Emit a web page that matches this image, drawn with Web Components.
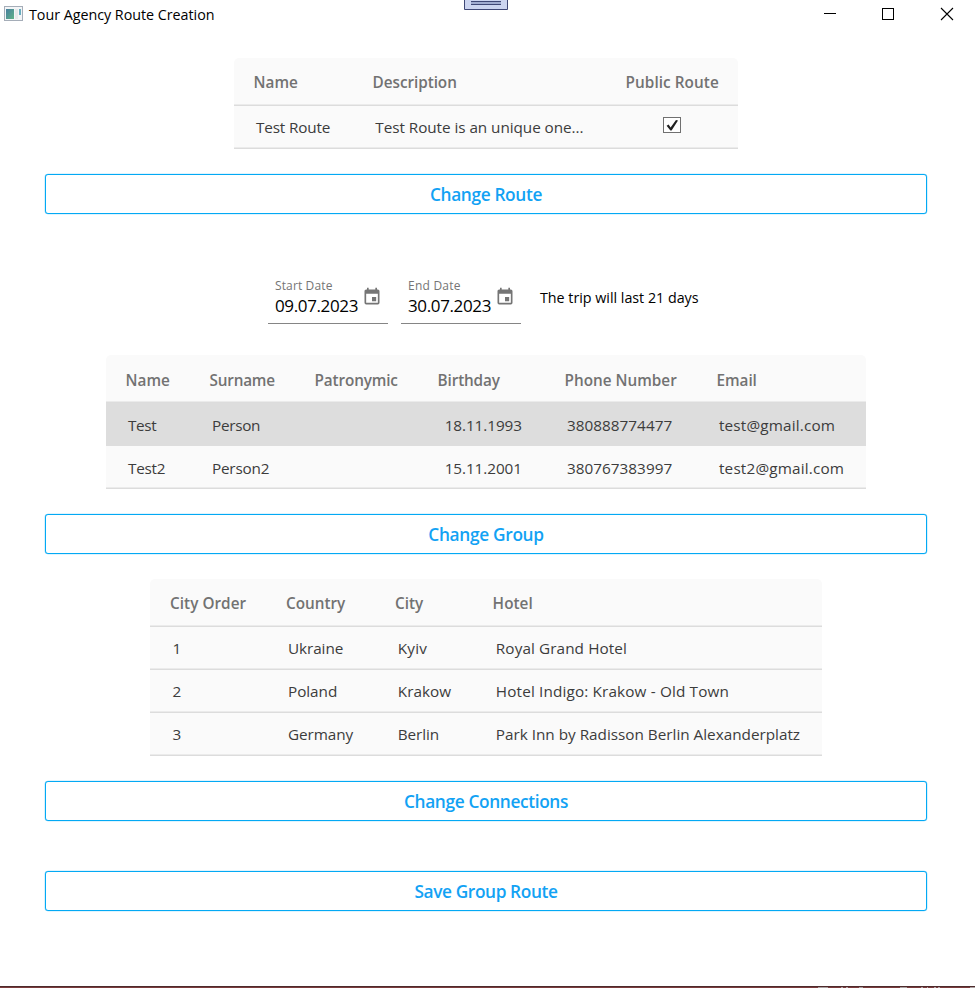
<!DOCTYPE html>
<html lang="en"><head><meta charset="utf-8"><title>Tour Agency Route Creation</title>
<style>
html,body{margin:0;height:100%;background:#fff;overflow:hidden}
body{font-family:"Open Sans","Noto Sans",sans-serif;color:#000}
</style></head><body>
<route-window></route-window>
<script>
// Text run whose tracking is adjusted so it takes the given width.
class FitText extends HTMLElement{
  connectedCallback(){
    const r=this.attachShadow({mode:'open'});
    r.innerHTML='<style>:host{display:inline-block;white-space:pre}span{display:inline-block}</style><span></span>';
    const s=r.querySelector('span'),t=this.getAttribute('text');
    s.textContent=t;
    const want=+this.getAttribute('w');
    if(want){
      const n=[...t].length,have=s.getBoundingClientRect().width;
      s.style.letterSpacing=((want-have)/n).toFixed(3)+'px';
    }
  }
}
customElements.define('fit-text',FitText);

const T=(text,w)=>`<fit-text text="${text}" w="${w}"></fit-text>`;

class TitleBar extends HTMLElement{
  connectedCallback(){
    this.attachShadow({mode:'open'}).innerHTML=`<style>
    :host{display:flex;height:30px;align-items:center;position:relative;font-size:14.3px}
    .app{margin-left:4px;display:block;margin-top:-3px}
    .title{margin-left:6px;flex:1;line-height:30px}
    .tab{position:absolute;left:464px;top:0}
    .ctl{height:30px;flex:none;display:block}
    </style>
    <svg class="app" width="19" height="15"><rect x=".5" y=".5" width="18" height="14" fill="#f3f5f7" stroke="#a5adb8"/><defs><linearGradient id="g" x1="0" y1="0" x2="1" y2="1"><stop offset="0" stop-color="#477f9f"/><stop offset="1" stop-color="#5fb287"/></linearGradient></defs><rect x="2" y="3" width="8" height="10" fill="url(#g)"/><rect x="11" y="3" width="3" height="10" fill="#e6e8ea"/><rect x="15" y="3" width="2" height="6" fill="#69aec0"/></svg>
    <span class="title">${T('Tour Agency Route Creation',185.5)}</span>
    <svg class="tab" width="44" height="10"><path d="M.5 0V9.5H43.5V0" fill="#ccd5f0" stroke="#3f4876"/><path d="M7 2.5H37" stroke="#a0acd0" stroke-width="3"/><path d="M7 1.5H37M7 4.5H37" stroke="#3f4876"/></svg>
    <svg class="ctl" width="58" viewBox="800 0 58 30"><path d="M824 13.5H836" stroke="#000"/></svg>
    <svg class="ctl" width="59" viewBox="858 0 59 30"><rect x="882.5" y="8.5" width="11" height="11" fill="none" stroke="#000"/></svg>
    <svg class="ctl" width="58" viewBox="917 0 58 30"><path d="M941 8L953 20M953 8L941 20" stroke="#000" stroke-width="1.1"/></svg>`;
  }
}
customElements.define('title-bar',TitleBar);

class OutlineButton extends HTMLElement{
  connectedCallback(){
    this.attachShadow({mode:'open'}).innerHTML=`<style>
    :host{display:block;width:882px;height:40px;margin-left:45px}
    button{box-sizing:border-box;width:100%;height:100%;padding:2px 0 0;margin:0;border:1.5px solid #03a9f4;border-radius:3px;background:#fff;color:#12a2f4;font:600 17.3px/36px "Open Sans","Noto Sans",sans-serif;display:flex;align-items:center;justify-content:center;box-shadow:0 0 0 .3px #7fd3f9}
    </style><button>${T(this.getAttribute('label'),this.getAttribute('w'))}</button>`;
  }
}
customElements.define('outline-button',OutlineButton);

class CheckMark extends HTMLElement{
  connectedCallback(){
    this.attachShadow({mode:'open'}).innerHTML=`<style>:host{display:block}svg{display:block}</style>
    <svg width="18" height="16"><rect x=".5" y=".5" width="17" height="15" fill="#fff" stroke="#707070"/><path d="M3.6 8.8L5.6 7.6L7.6 10.4L13 3L15 3.6L8.6 13.4H7.4Z" fill="#212121"/></svg>`;
  }
}
customElements.define('check-mark',CheckMark);

class DataGrid extends HTMLElement{
  set data(d){
    const row=(cells,cls)=>`<div class="row ${cls}">${cells.map(c=>{
      if(!c)return '<div class="cell"></div>';
      if(c==='check')return '<div class="cell check"><check-mark></check-mark></div>';
      return `<div class="cell" style="padding-left:${c[2]||(cls==='head'?19.6:22)}px">${T(c[0],c[1]-.8)}</div>`;}).join('')}</div>`;
    this.attachShadow({mode:'open'}).innerHTML=`<style>
    :host{display:block;width:${d.width}px;margin-left:${d.left}px;background:#fafafa;border-radius:5px 5px 0 0;font-size:15.3px;color:#3c3c3c}
    .row{display:grid;grid-template-columns:${d.cols};height:43px;box-sizing:border-box;border-bottom:1px solid #dcdcdc;box-shadow:inset 0 -1px #ebebeb}
    .head{height:48px;color:#727272;font-weight:600}
    .cell{display:flex;align-items:center;line-height:21px;white-space:nowrap;min-width:0;padding-top:${d.pad}px}
    .head .cell{padding-top:${d.pad+1}px}
    .cell.check{padding-left:57px;padding-top:0;padding-bottom:5px}
    .sel{background:#ddd;border-color:#ddd;box-shadow:none}
    </style>${row(d.head,'head')}${d.rows.map((r,i)=>row(r,d.selected===i?'sel':'')).join('')}`;
  }
}
customElements.define('data-grid',DataGrid);

class DateField extends HTMLElement{
  connectedCallback(){
    this.attachShadow({mode:'open'}).innerHTML=`<style>
    :host{display:grid;grid-template-columns:84px 29px;box-sizing:border-box;width:120px;height:46px;border-bottom:1.5px solid #858585;padding-left:7px}
    .label{font-size:12px;line-height:17px;margin-top:-1px;color:#757575}
    .value{font-size:17px;line-height:23px;color:#000}
    svg{width:20px;height:20px;margin:9px 0 0 3px;display:block}
    </style><div><div class="label">${T(this.getAttribute('label'),this.getAttribute('lw'))}</div><div class="value">${T(this.getAttribute('value'),83)}</div></div>
    <svg viewBox="0 0 24 24" fill="#757575"><path d="M19 19H5V8H19M16 1V3H8V1H6V3H5C3.89 3 3 3.89 3 5V19A2 2 0 0 0 5 21H19A2 2 0 0 0 21 19V5C21 3.89 20.1 3 19 3H18V1M17 12H12V17H17V12Z"/></svg>`;
  }
}
customElements.define('date-field',DateField);

class RouteWindow extends HTMLElement{
  connectedCallback(){
    const r=this.attachShadow({mode:'open'});
    r.innerHTML=`<style>
    :host{display:flex;flex-direction:column;width:975px;height:988px;background:#fff}
    .dates{display:flex;margin:64px 0 0 268px;height:46px;gap:13px}
    .trip{font-size:14.3px;line-height:20px;margin:10px 0 0 6px}
    #route{margin-top:28px}#group{margin-top:31px}#cities{margin-top:25px}
    .b{margin-top:25px}.save{margin-top:50px}
    .edge{margin-top:auto;height:2px;display:block;width:975px}
    </style>
    <title-bar></title-bar>
    <data-grid id="route"></data-grid>
    <outline-button class="b" label="Change Route" w="112"></outline-button>
    <div class="dates"><date-field label="Start Date" lw="57.5" value="09.07.2023"></date-field><date-field label="End Date" lw="52.7" value="30.07.2023"></date-field><div class="trip">${T('The trip will last 21 days',158.5)}</div></div>
    <data-grid id="group"></data-grid>
    <outline-button class="b" label="Change Group" w="115.5"></outline-button>
    <data-grid id="cities"></data-grid>
    <outline-button class="b" label="Change Connections" w="164"></outline-button>
    <outline-button class="save" label="Save Group Route" w="143"></outline-button>
    <svg class="edge" width="975" height="2"><rect width="975" height="1" fill="#4d2b2c"/><rect y="1" width="975" height="1" fill="#7b3c3d"/><path d="M818 1.5H828M859 1.5H863M900 1.5H907M970 1.5H975" stroke="#aaa0a0"/><path d="M841 1.5h2M846 1.5h2M921 1.5h2M927 1.5h1M934 1.5h2M938 1.5h2" stroke="#b3a4a8"/></svg>`;
    const $=id=>r.getElementById(id);
    $('route').data={left:234,width:504,pad:1,cols:'119px 253px 132px',
      head:[['Name',45],['Description',85],['Public Route',94]],
      rows:[[['Test Route',75],['Test Route is an unique one...',209,22.3],'check']]};
    $('group').data={left:106,width:760,pad:2,cols:'84px 105px 123px 127px 152px 169px',selected:0,
      head:[['Name',45],['Surname',66],['Patronymic',84],['Birthday',63],['Phone Number',113],['Email',41]],
      rows:[[['Test',29],['Person',49],null,['18.11.1993',78,26.7],['380888774477',106],['test@gmail.com',117]],
            [['Test2',38],['Person2',58],null,['15.11.2001',78,26.7],['380767383997',106],['test2@gmail.com',126]]]};
    $('cities').data={left:150,width:672,pad:1,cols:'116px 109px 98px 349px',
      head:[['City Order',77,20],['Country',60,20],['City',29,20],['Hotel',41]],
      rows:[[['1',9,22.5],['Ukraine',56],['Kyiv',30,22.8],['Royal Grand Hotel',132,22.8]],
            [['2',9,22.5],['Poland',50],['Krakow',54,22.8],['Hotel Indigo: Krakow - Old Town',234,22.8]],
            [['3',9,22.5],['Germany',66],['Berlin',42,22.8],['Park Inn by Radisson Berlin Alexanderplatz',305,22.8]]]};
  }
}
customElements.define('route-window',RouteWindow);
</script></body></html>
